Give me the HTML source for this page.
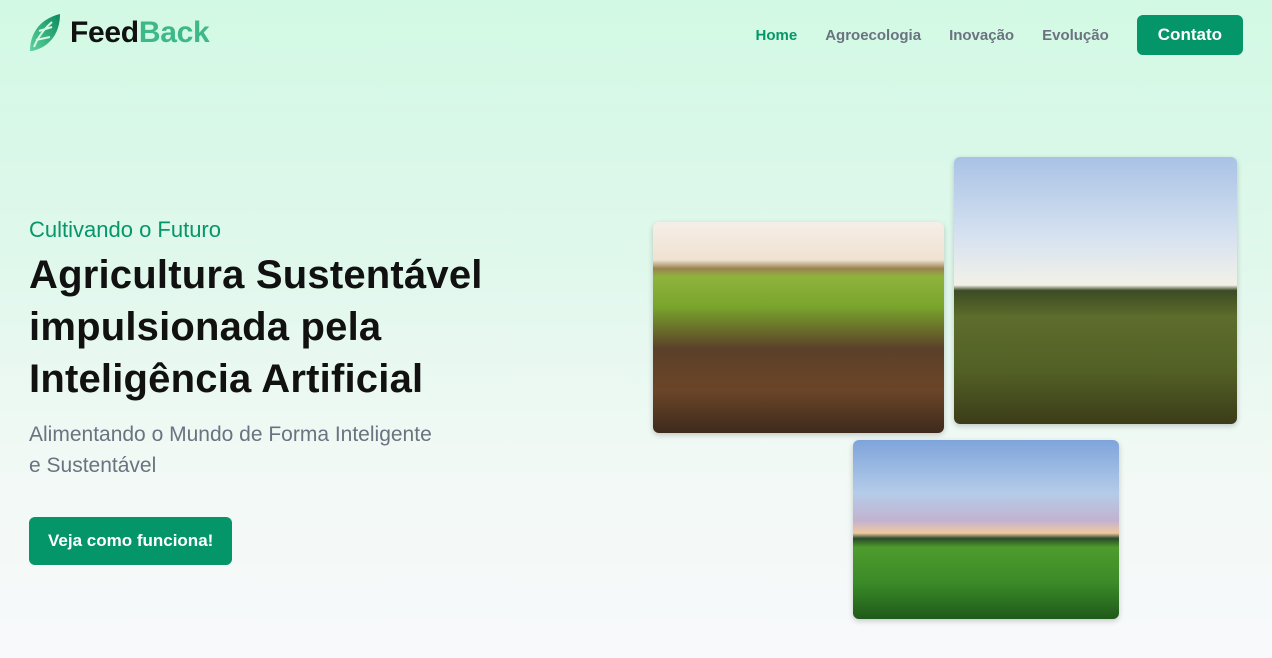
<!DOCTYPE html>
<html><head><meta charset="utf-8"><style>
*{margin:0;padding:0;box-sizing:border-box}
body{width:1272px;height:658px;overflow:hidden;font-family:"Liberation Sans",sans-serif;background:linear-gradient(180deg,#d2f9e4 0%,#e0f8ec 40%,#f1f9f5 70%,#f8f9fb 100%);position:relative}
.logo{position:absolute;left:28px;top:13px;display:flex;align-items:center}
.logo span{font-size:30px;font-weight:bold;margin-left:8px;letter-spacing:-0.3px}
nav{position:absolute;top:15px;right:29px;display:flex;align-items:center;font-size:15px;font-weight:bold;color:#6b7280}
nav a{margin-right:28px}
.btn{background:#049669;color:#fff;border-radius:6px}
.c{position:absolute;left:29px;top:217px}
.c h3{color:#059669;font-size:22px;font-weight:normal;margin-bottom:6px}
.c h1{font-size:40px;line-height:52px;font-weight:bold;color:#111;letter-spacing:0.2px}
.c p{font-size:21px;line-height:31px;color:#6b7280;margin-top:14px;width:480px}
.im{position:absolute;border-radius:6px;box-shadow:0 2px 6px rgba(0,0,0,.2);overflow:hidden}
</style></head><body>
<div class="logo">
<svg width="34" height="40" viewBox="0 0 34 40"><defs><linearGradient id="g" x1="0" y1="1" x2="1" y2="0"><stop offset="0" stop-color="#5fd39e"/><stop offset="1" stop-color="#0b8a5c"/></linearGradient></defs>
<path d="M2 38 C2 20 12 6 32 1 C32 20 22 34 4 38 Z" fill="url(#g)"/>
<path d="M6 34 C10 24 16 16 24 9 M11 18 L24 14 M8 27 L22 24" stroke="#d2f9e4" stroke-width="2" fill="none"/></svg>
<span><span style="margin:0;color:#111">Feed</span><span style="margin:0;color:#3fb889">Back</span></span></div>
<nav><a style="color:#059669">Home</a><a>Agroecologia</a><a>Inovação</a><a>Evolução</a>
<div class="btn" style="font-size:17px;padding:10px 21px">Contato</div></nav>
<div class="c"><h3>Cultivando o Futuro</h3>
<h1>Agricultura Sustentável<br>impulsionada pela<br>Inteligência Artificial</h1>
<p>Alimentando o Mundo de Forma Inteligente<br>e Sustentável</p>
<div class="btn" style="display:inline-block;margin-top:36px;font-size:17px;font-weight:bold;padding:14px 19px">Veja como funciona!</div></div>
<div class="im" style="left:653px;top:222px;width:291px;height:211px;background:linear-gradient(180deg,#f5efe8 0%,#f0e2d2 18%,#9a8250 22%,#8fb33c 26%,#7aa52c 40%,#5b4029 60%,#6b4528 80%,#3d2a1c 100%)"></div>
<div class="im" style="left:954px;top:157px;width:283px;height:267px;background:linear-gradient(180deg,#a9c2e6 0%,#d6e2f0 30%,#f2f1e8 48%,#3c4b23 50%,#5d6d2c 60%,#526025 80%,#3c3c18 100%)"></div>
<div class="im" style="left:853px;top:440px;width:266px;height:179px;background:linear-gradient(180deg,#7ea4db 0%,#b5cce9 30%,#c2b2cf 45%,#f0c9a0 52%,#2a4a2a 55%,#4e9c2c 60%,#3a8a28 80%,#1f5a1a 100%)"></div>
</body></html>
